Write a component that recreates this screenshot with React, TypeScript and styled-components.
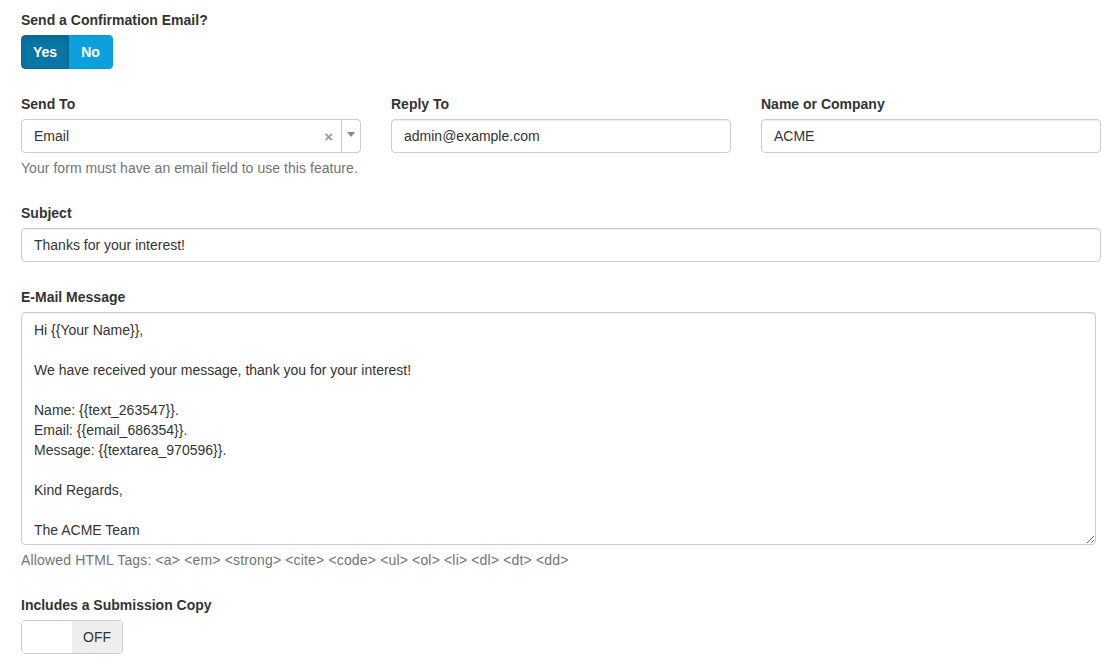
import React from "react";
import styled, { createGlobalStyle } from "styled-components";

const Global = createGlobalStyle`
  html, body { margin: 0; padding: 0; background: #fff; }
  body { font-family: "Liberation Sans", Arial, sans-serif; font-size: 14px; line-height: 20px; color: #333; }
  * { box-sizing: border-box; }
`;

const Page = styled.div`
  padding: 10px 19px 0 21px;
  width: 1120px;
`;

const Group = styled.div`
  margin-bottom: 25px;
`;

const Label = styled.label`
  display: block;
  font-weight: bold;
  font-size: 14px;
  line-height: 20px;
  color: #333;
  margin-bottom: 5px;
`;

const BtnGroup = styled.div`
  display: inline-flex;
  border-radius: 4px;
  overflow: hidden;
`;

const ToggleBtn = styled.button<{ $active?: boolean }>`
  font-family: inherit;
  font-size: 14px;
  font-weight: bold;
  line-height: 20px;
  padding: 6px 11px;
  color: #fff;
  border: 1px solid ${(p) => (p.$active ? "#066a93" : "#0a96cf")};
  background: ${(p) => (p.$active ? "#0a76a4" : "#0ca0dc")};
  box-shadow: ${(p) => (p.$active ? "inset 0 3px 5px rgba(0,0,0,0.125)" : "none")};
  cursor: pointer;
  &:first-child { border-radius: 4px 0 0 4px; }
  &:last-child { border-radius: 0 4px 4px 0; border-left: 0; padding: 6px 12px; }
`;

const Row = styled.div`
  display: grid;
  grid-template-columns: repeat(3, 1fr);
  column-gap: 30px;
  margin-bottom: 25px;
`;

const Input = styled.input`
  display: block;
  width: 100%;
  height: 34px;
  padding: 6px 12px;
  font-family: inherit;
  font-size: 14px;
  line-height: 20px;
  color: #333;
  border: 1px solid #ccc;
  border-radius: 4px;
  background: #fff;
  box-shadow: inset 0 1px 1px rgba(0,0,0,0.075);
  outline: none;
`;

const Help = styled.div<{ $wide?: boolean }>`
  margin-top: 5px;
  color: #737373;
  font-size: 14px;
  line-height: 20px;
  letter-spacing: ${(p) => (p.$wide ? "0.16px" : "0.05px")};
`;

const SelectBox = styled.div`
  display: flex;
  align-items: stretch;
  height: 34px;
  border: 1px solid #ccc;
  border-radius: 4px;
  background: #fff;
`;

const SelectValue = styled.span`
  flex: 1;
  padding: 6px 12px;
  color: #333;
  line-height: 20px;
`;

const ClearX = styled.span`
  display: flex;
  align-items: center;
  padding: 2px 8px 0 0;
  color: #999;
  font-size: 15px;
  font-weight: bold;
`;

const ArrowBox = styled.span`
  width: 19px;
  border-left: 1px solid #ccc;
  display: flex;
  align-items: flex-start;
  justify-content: center;
  padding-top: 12px;
`;

const Caret = styled.span`
  width: 0;
  height: 0;
  border-left: 4px solid transparent;
  border-right: 4px solid transparent;
  border-top: 5px solid #888;
`;

const TextArea = styled.textarea`
  display: block;
  width: 1075px;
  height: 233px;
  padding: 7px 12px;
  font-family: inherit;
  font-size: 14px;
  line-height: 20px;
  color: #333;
  border: 1px solid #ccc;
  border-radius: 4px;
  box-shadow: inset 0 1px 1px rgba(0,0,0,0.075);
  resize: both;
  outline: none;
`;

const Switch = styled.div`
  display: inline-flex;
  width: 102px;
  height: 34px;
  border: 1px solid #ccc;
  border-radius: 4px;
  overflow: hidden;
`;

const SwitchBlank = styled.span`
  width: 50px;
  background: #fff;
`;

const SwitchOff = styled.span`
  flex: 1;
  background: #eee;
  color: #333;
  display: flex;
  align-items: center;
  justify-content: center;
  font-size: 14px;
`;

const message = `Hi {{Your Name}},

We have received your message, thank you for your interest!

Name: {{text_263547}}.
Email: {{email_686354}}.
Message: {{textarea_970596}}.

Kind Regards,

The ACME Team`;

export default function App() {
  return (
    <Page>
      <Global />
      <Group>
        <Label>Send a Confirmation Email?</Label>
        <BtnGroup>
          <ToggleBtn $active>Yes</ToggleBtn>
          <ToggleBtn>No</ToggleBtn>
        </BtnGroup>
      </Group>

      <Row>
        <div>
          <Label>Send To</Label>
          <SelectBox>
            <SelectValue>Email</SelectValue>
            <ClearX>×</ClearX>
            <ArrowBox>
              <Caret />
            </ArrowBox>
          </SelectBox>
          <Help>Your form must have an email field to use this feature.</Help>
        </div>
        <div>
          <Label>Reply To</Label>
          <Input defaultValue="admin@example.com" />
        </div>
        <div>
          <Label>Name or Company</Label>
          <Input defaultValue="ACME" />
        </div>
      </Row>

      <Group>
        <Label>Subject</Label>
        <Input defaultValue="Thanks for your interest!" />
      </Group>

      <Group>
        <Label>E-Mail Message</Label>
        <TextArea defaultValue={message} />
        <Help $wide>Allowed HTML Tags: &lt;a&gt; &lt;em&gt; &lt;strong&gt; &lt;cite&gt; &lt;code&gt; &lt;ul&gt; &lt;ol&gt; &lt;li&gt; &lt;dl&gt; &lt;dt&gt; &lt;dd&gt;</Help>
      </Group>

      <Group>
        <Label>Includes a Submission Copy</Label>
        <Switch>
          <SwitchBlank />
          <SwitchOff>OFF</SwitchOff>
        </Switch>
      </Group>
    </Page>
  );
}
